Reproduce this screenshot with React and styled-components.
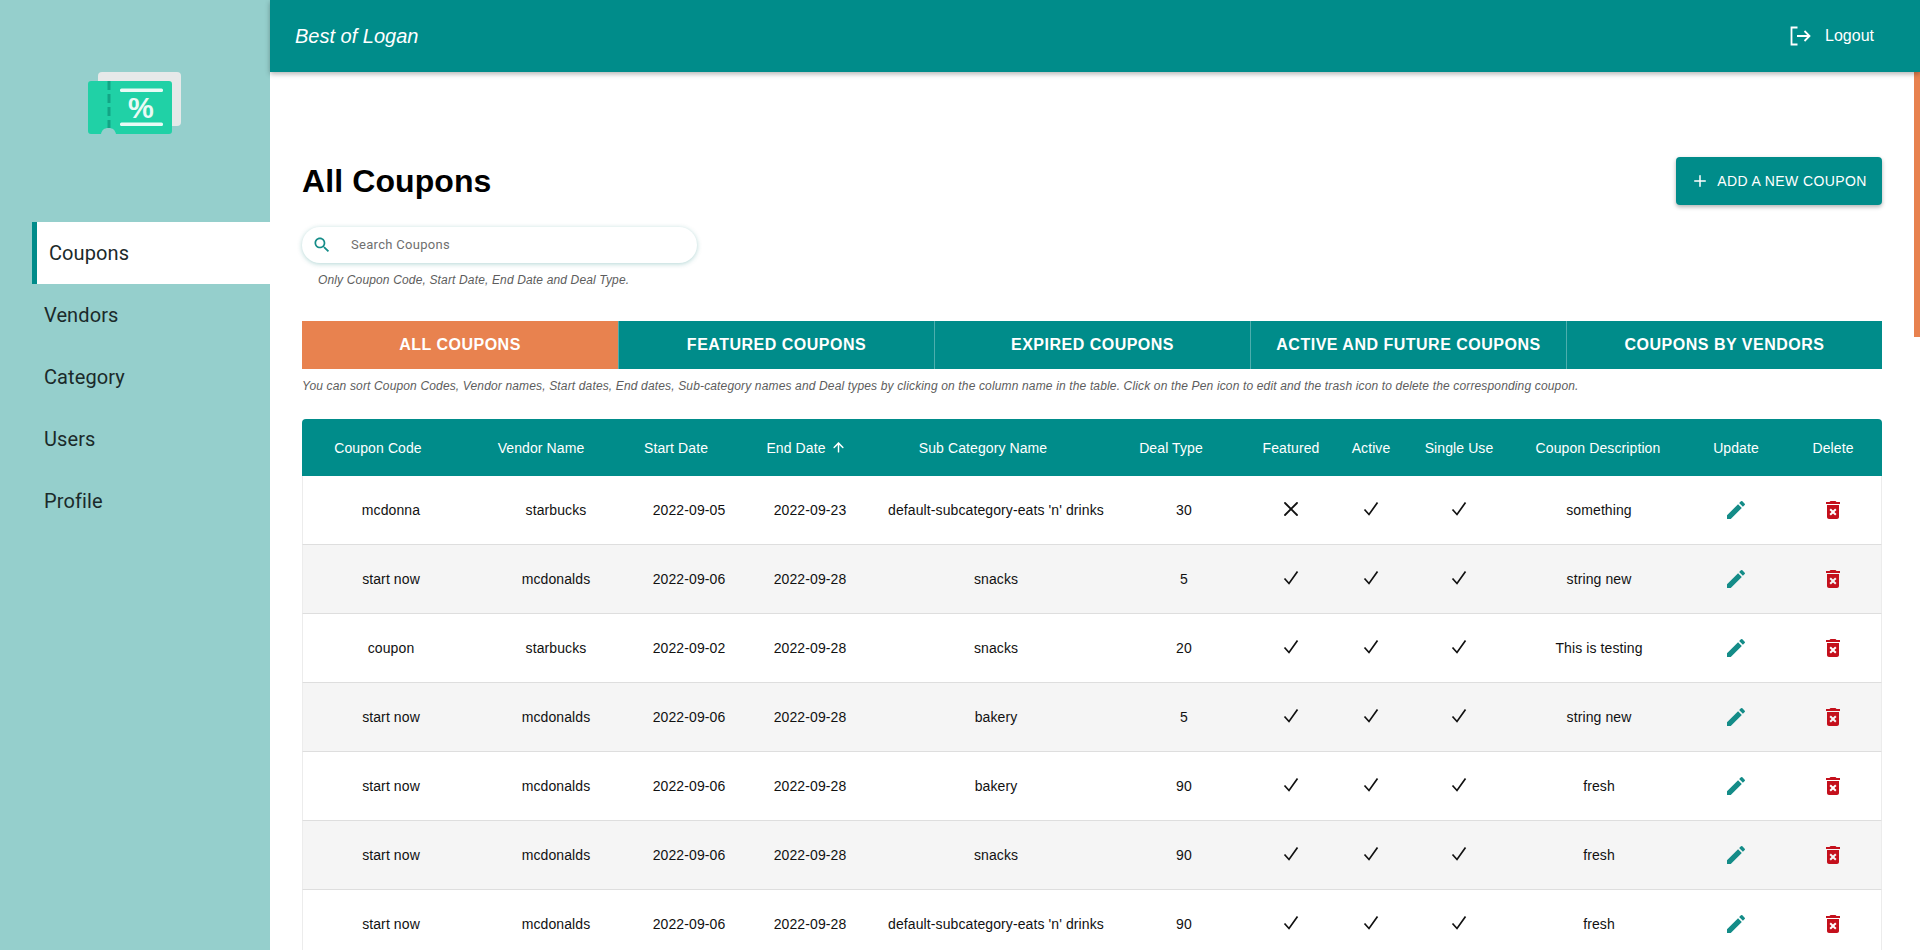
import React from "react";
import styled, { createGlobalStyle } from "styled-components";
import { X, Plus, ArrowUp } from "lucide-react";

const GlobalStyle = createGlobalStyle`
  html, body {
    margin: 0;
    padding: 0;
    height: 100%;
    overflow: hidden;
    background: #fff;
    font-family: "Liberation Sans", Arial, sans-serif;
  }
  * {
    box-sizing: border-box;
  }
`;

const GRID = "176px 154px 112px 130px 242px 134px 82px 78px 98px 180px 94px 100px";

const Page = styled.div`
  display: flex;
  height: 950px;
  overflow: hidden;
`;

const Sidebar = styled.aside`
  width: 270px;
  flex-shrink: 0;
  background: #95cfcc;
  display: flex;
  flex-direction: column;
  padding-top: 72px;
`;

const LogoWrap = styled.div`
  height: 150px;
  padding-left: 88px;
`;

const NavList = styled.nav`
  display: flex;
  flex-direction: column;
`;

const NavItem = styled.a`
  height: 62px;
  margin-left: ${(p) => (p.$active ? "32px" : "27px")};
  display: flex;
  align-items: center;
  font-family: Roboto, "Liberation Sans", sans-serif;
  font-size: 20px;
  letter-spacing: 0.1px;
  color: #1b2a2a;
  padding-left: 12px;
  background: ${(p) => (p.$active ? "#fff" : "transparent")};
  border-left: 5px solid ${(p) => (p.$active ? "#008c8a" : "transparent")};
`;

const RightSide = styled.div`
  flex: 1;
  min-width: 0;
  display: flex;
  flex-direction: column;
`;

const TopBar = styled.header`
  height: 72px;
  flex-shrink: 0;
  background: #008c8a;
  color: #fff;
  display: flex;
  align-items: center;
  justify-content: space-between;
  padding: 0 46px 0 25px;
  box-shadow: 0 2px 5px rgba(0, 0, 0, 0.3);
  position: relative;
  z-index: 2;
`;

const Brand = styled.div`
  font-size: 20px;
  font-style: italic;
`;

const LogoutLink = styled.a`
  display: flex;
  align-items: center;
  gap: 13px;
  font-size: 16px;
`;

const Main = styled.main`
  flex: 1;
  position: relative;
  overflow: hidden;
  padding: 85px 38px 0 32px;
`;

const ScrollThumb = styled.div`
  position: absolute;
  top: 0;
  right: 0;
  width: 6px;
  height: 265px;
  background: #e8824f;
`;

const TitleRow = styled.div`
  display: flex;
  justify-content: space-between;
  align-items: center;
  height: 48px;
`;

const Title = styled.h1`
  margin: 0;
  font-size: 32px;
  font-weight: 700;
  letter-spacing: 0.1px;
  color: #000;
`;

const AddButton = styled.button`
  height: 48px;
  width: 206px;
  border: 0;
  border-radius: 4px;
  background: #008c8a;
  color: #fff;
  font-family: "Liberation Sans", sans-serif;
  font-size: 14px;
  letter-spacing: 0.4px;
  display: flex;
  align-items: center;
  justify-content: center;
  gap: 8px;
  box-shadow: 0 2px 4px rgba(0, 0, 0, 0.3);
`;

const SearchBox = styled.div`
  margin-top: 22px;
  width: 395px;
  height: 36px;
  border-radius: 18px;
  background: #fff;
  box-shadow: 0 1px 5px rgba(0, 120, 115, 0.3);
  display: flex;
  align-items: center;
  padding-left: 10px;
  gap: 19px;
`;

const SearchInput = styled.input`
  border: 0;
  outline: 0;
  flex: 1;
  padding: 0 0 2px;
  font-family: Roboto, sans-serif;
  font-size: 13px;
  letter-spacing: 0.3px;
  background: transparent;
  &::placeholder {
    color: #6f6f6f;
    opacity: 1;
  }
`;

const Hint = styled.p`
  margin: 10px 0 0 ${(p) => p.$indent || 0}px;
  font-family: "Liberation Sans", sans-serif;
  font-size: 12px;
  line-height: 14px;
  font-style: italic;
  color: #5d5d5d;
  letter-spacing: 0.15px;
`;

const Tabs = styled.div`
  margin-top: 34px;
  display: grid;
  grid-template-columns: repeat(5, 1fr);
  height: 48px;
`;

const Tab = styled.button`
  border: 0;
  border-left: 1px solid rgba(255, 255, 255, 0.3);
  background: ${(p) => (p.$active ? "#e8824f" : "#008c8a")};
  color: #fff;
  font-family: "Liberation Sans", sans-serif;
  font-size: 16px;
  font-weight: 700;
  letter-spacing: 0.5px;
  text-transform: uppercase;
  &:first-child {
    border-left: 0;
  }
`;

const Table = styled.div`
  margin-top: 26px;
`;

const HeadRow = styled.div`
  display: grid;
  grid-template-columns: ${GRID};
  height: 57px;
  align-items: center;
  background: #008c8a;
  border-radius: 4px 4px 0 0;
  color: #fff;
  font-size: 14px;
  letter-spacing: 0.1px;
`;

const HeadCell = styled.div`
  padding-right: ${(p) => p.$pull || 0}px;
  padding-left: ${(p) => p.$push || 0}px;
  display: flex;
  align-items: center;
  justify-content: center;
  gap: 5px;
`;

const Row = styled.div`
  display: grid;
  grid-template-columns: ${GRID};
  height: 69px;
  align-items: center;
  background: ${(p) => (p.$striped ? "#f5f5f5" : "#fff")};
  border-bottom: 1px solid #dedede;
  border-left: 1px solid #ececec;
  border-right: 1px solid #ececec;
  color: #111;
  font-size: 14px;
  letter-spacing: 0.1px;
`;

const Cell = styled.div`
  display: flex;
  justify-content: center;
`;

const FlagCell = styled(Cell)`
  margin-top: -3px;
  padding-right: 2px;
`;

const Logo = () => (
  <svg width="96" height="66" viewBox="0 0 96 66">
    <rect x="10" y="0" width="83" height="54" rx="4" fill="#e6e9e9" />
    <path
      d="M3 9h78a3 3 0 0 1 3 3v47a3 3 0 0 1-3 3H28c-1-4-3-6-7.5-6S14 58 13 62H3a3 3 0 0 1-3-3V12a3 3 0 0 1 3-3z"
      fill="#20d1a6"
    />
    <path d="M21 9v47" stroke="#12a585" strokeWidth="3" strokeDasharray="9 4" />
    <rect x="32" y="16.5" width="43" height="3.5" rx="1.5" fill="#eafaf5" />
    <rect x="32" y="50.5" width="43" height="3.5" rx="1.5" fill="#eafaf5" />
    <text
      x="53"
      y="46"
      textAnchor="middle"
      fontFamily="Liberation Sans, sans-serif"
      fontWeight="700"
      fontSize="29"
      fill="#eafaf5"
    >
      %
    </text>
  </svg>
);

const LogoutIcon = () => (
  <svg width="24" height="24" viewBox="0 0 24 24" fill="none" stroke="#fff" strokeWidth="1.8">
    <path d="M9.5 3.5H3.5v17h6" />
    <path d="M9 12h12.5M16.5 7l5 5-5 5" />
  </svg>
);

const SearchIcon = () => (
  <svg width="20" height="20" viewBox="0 0 24 24" fill="#148c88">
    <path d="M15.5 14h-.79l-.28-.27C15.41 12.59 16 11.11 16 9.5 16 5.91 13.09 3 9.5 3S3 5.91 3 9.5 5.91 16 9.5 16c1.61 0 3.09-.59 4.23-1.57l.27.28v.79l5 4.99L20.49 19l-4.99-5zm-6 0C7.01 14 5 11.99 5 9.5S7.01 5 9.5 5 14 7.01 14 9.5 11.99 14 9.5 14z" />
  </svg>
);

const Tick = () => (
  <svg width="16" height="15" viewBox="0 0 16 15" fill="none" stroke="#111" strokeWidth="1.7">
    <path d="M1.5 8.5 6 13.5l8.5-12" />
  </svg>
);

const Pen = () => (
  <svg width="24" height="24" viewBox="0 0 24 24" fill="#148c88">
    <path d="M3 17.25V21h3.75L17.81 9.94l-3.75-3.75L3 17.25zM20.71 7.04a1 1 0 0 0 0-1.41l-2.34-2.34a1 1 0 0 0-1.41 0l-1.83 1.83 3.75 3.75 1.83-1.83z" />
  </svg>
);

const Trash = () => (
  <svg width="24" height="24" viewBox="0 0 24 24" fill="#c4101c">
    <path d="M6 19c0 1.1.9 2 2 2h8c1.1 0 2-.9 2-2V7H6v12zm2.46-7.12 1.41-1.41L12 12.59l2.12-2.12 1.41 1.41L13.41 14l2.12 2.12-1.41 1.41L12 15.41l-2.12 2.12-1.41-1.41L10.59 14l-2.13-2.12zM15.5 4l-1-1h-5l-1 1H5v2h14V4z" />
  </svg>
);

const navItems = ["Coupons", "Vendors", "Category", "Users", "Profile"];

const tabs = [
  "All Coupons",
  "Featured Coupons",
  "Expired Coupons",
  "Active and Future Coupons",
  "Coupons by Vendors"
];

const columns = [
  { label: "Coupon Code", pull: 24 },
  { label: "Vendor Name", pull: 28 },
  { label: "Start Date", pull: 24 },
  { label: "End Date", pull: 6, sorted: true },
  { label: "Sub Category Name", pull: 24 },
  { label: "Deal Type", pull: 24 },
  { label: "Featured" },
  { label: "Active" },
  { label: "Single Use" },
  { label: "Coupon Description" },
  { label: "Update", push: 2 },
  { label: "Delete", push: 2 }
];

const DEFAULT_SUB = "default-subcategory-eats 'n' drinks";

const coupons = [
  ["mcdonna", "starbucks", "2022-09-05", "2022-09-23", DEFAULT_SUB, "30", false, "something"],
  ["start now", "mcdonalds", "2022-09-06", "2022-09-28", "snacks", "5", true, "string new"],
  ["coupon", "starbucks", "2022-09-02", "2022-09-28", "snacks", "20", true, "This is testing"],
  ["start now", "mcdonalds", "2022-09-06", "2022-09-28", "bakery", "5", true, "string new"],
  ["start now", "mcdonalds", "2022-09-06", "2022-09-28", "bakery", "90", true, "fresh"],
  ["start now", "mcdonalds", "2022-09-06", "2022-09-28", "snacks", "90", true, "fresh"],
  ["start now", "mcdonalds", "2022-09-06", "2022-09-28", DEFAULT_SUB, "90", true, "fresh"]
];

function App() {
  return (
    <>
      <GlobalStyle />
      <Page>
        <Sidebar>
          <LogoWrap>
            <Logo />
          </LogoWrap>
          <NavList>
            {navItems.map((item, i) => (
              <NavItem key={item} $active={i === 0}>
                {item}
              </NavItem>
            ))}
          </NavList>
        </Sidebar>
        <RightSide>
          <TopBar>
            <Brand>Best of Logan</Brand>
            <LogoutLink>
              <LogoutIcon />
              Logout
            </LogoutLink>
          </TopBar>
          <Main>
            <ScrollThumb />
            <TitleRow>
              <Title>All Coupons</Title>
              <AddButton>
                <Plus size={18} />
                ADD A NEW COUPON
              </AddButton>
            </TitleRow>
            <SearchBox>
              <SearchIcon />
              <SearchInput placeholder="Search Coupons" />
            </SearchBox>
            <Hint $indent={16}>Only Coupon Code, Start Date, End Date and Deal Type.</Hint>
            <Tabs>
              {tabs.map((tab, i) => (
                <Tab key={tab} $active={i === 0}>
                  {tab}
                </Tab>
              ))}
            </Tabs>
            <Hint>
              You can sort Coupon Codes, Vendor names, Start dates, End dates, Sub-category names and Deal
              types by clicking on the column name in the table. Click on the Pen icon to edit and the
              trash icon to delete the corresponding coupon.
            </Hint>
            <Table>
              <HeadRow>
                {columns.map((col) => (
                  <HeadCell key={col.label} $pull={col.pull} $push={col.push}>
                    {col.label}
                    {col.sorted && <ArrowUp size={15} strokeWidth={2.3} />}
                  </HeadCell>
                ))}
              </HeadRow>
              {coupons.map((c, i) => (
                <Row key={i} $striped={i % 2 === 1}>
                  {c.slice(0, 6).map((value, j) => (
                    <Cell key={j}>{value}</Cell>
                  ))}
                  <FlagCell>{c[6] ? <Tick /> : <X size={24} strokeWidth={1.8} color="#111" />}</FlagCell>
                  <FlagCell>
                    <Tick />
                  </FlagCell>
                  <FlagCell>
                    <Tick />
                  </FlagCell>
                  <Cell>{c[7]}</Cell>
                  <Cell>
                    <Pen />
                  </Cell>
                  <Cell>
                    <Trash />
                  </Cell>
                </Row>
              ))}
            </Table>
          </Main>
        </RightSide>
      </Page>
    </>
  );
}

export default App;
